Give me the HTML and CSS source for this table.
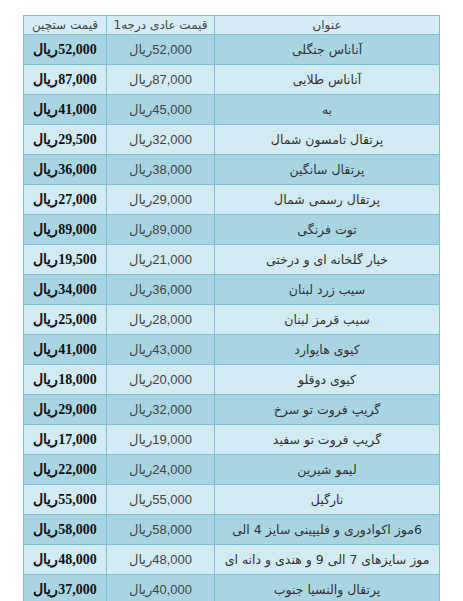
FILE: index.html
```html
<!DOCTYPE html>
<html lang="fa" dir="rtl">
<head>
    <meta charset="UTF-8">
    <meta name="viewport" content="width=device-width, initial-scale=1.0">
    <title>قیمت میوه</title>
    <link rel="stylesheet" href="styles.css">
</head>
<body>
    <table class="prices">
        <thead>
            <tr>
                <th class="name">عنوان</th>
                <th class="normal">قیمت عادی درجه1</th>
                <th class="select">قیمت ستچین</th>
            </tr>
        </thead>
        <tbody>
            <tr><td>آناناس جنگلی</td><td>52,000ریال</td><td>52,000ریال</td></tr>
            <tr><td>آناناس طلایی</td><td>87,000ریال</td><td>87,000ریال</td></tr>
            <tr><td>به</td><td>45,000ریال</td><td>41,000ریال</td></tr>
            <tr><td>پرتقال تامسون شمال</td><td>32,000ریال</td><td>29,500ریال</td></tr>
            <tr><td>پرتقال سانگین</td><td>38,000ریال</td><td>36,000ریال</td></tr>
            <tr><td>پرتقال رسمی شمال</td><td>29,000ریال</td><td>27,000ریال</td></tr>
            <tr><td>توت فرنگی</td><td>89,000ریال</td><td>89,000ریال</td></tr>
            <tr><td>خیار گلخانه ای و درختی</td><td>21,000ریال</td><td>19,500ریال</td></tr>
            <tr><td>سیب زرد لبنان</td><td>36,000ریال</td><td>34,000ریال</td></tr>
            <tr><td>سیب قرمز لبنان</td><td>28,000ریال</td><td>25,000ریال</td></tr>
            <tr><td>کیوی هایوارد</td><td>43,000ریال</td><td>41,000ریال</td></tr>
            <tr><td>کیوی دوقلو</td><td>20,000ریال</td><td>18,000ریال</td></tr>
            <tr><td>گریپ فروت تو سرخ</td><td>32,000ریال</td><td>29,000ریال</td></tr>
            <tr><td>گریپ فروت تو سفید</td><td>19,000ریال</td><td>17,000ریال</td></tr>
            <tr><td>لیمو شیرین</td><td>24,000ریال</td><td>22,000ریال</td></tr>
            <tr><td>نارگیل</td><td>55,000ریال</td><td>55,000ریال</td></tr>
            <tr><td>6موز اکوادوری و فلیپینی سایز 4 الی</td><td>58,000ریال</td><td>58,000ریال</td></tr>
            <tr><td>موز سایزهای 7 الی 9 و هندی و دانه ای</td><td>48,000ریال</td><td>48,000ریال</td></tr>
            <tr><td>پرتقال والنسیا جنوب</td><td>40,000ریال</td><td>37,000ریال</td></tr>
        </tbody>
    </table>
</body>
</html>
```

FILE: styles.css
```css
body {
    margin: 0;
    padding: 15px 0 0;
    background: #ffffff;
    font-family: "DejaVu Sans", sans-serif;
    color: #222;
}

.prices {
    margin: 0 auto;
    width: 417px;
    border-collapse: collapse;
    table-layout: fixed;
    text-align: center;
}

.prices th,
.prices td {
    border: 1px solid #7dc2d3;
    padding: 0 1px;
    white-space: nowrap;
    overflow: hidden;
}

.prices th {
    height: 18px;
    background: #d5ecf4;
    font-weight: normal;
    font-size: 12px;
    color: #444;
}

.prices .name {
    width: 222px;
}

.prices .normal {
    width: 105px;
}

.prices td {
    height: 29px;
    font-size: 12.5px;
    color: #333;
}

.prices tbody tr:nth-child(odd) {
    background: #a9d5e3;
}

.prices tbody tr:nth-child(even) {
    background: #d2eaf2;
}

.prices td:nth-child(2) {
    font-family: "Liberation Sans", "DejaVu Sans", sans-serif;
    font-size: 13px;
    color: #444;
}

.prices td:nth-child(3) {
    font-family: "Liberation Serif", "DejaVu Serif", serif;
    font-weight: bold;
    font-size: 14px;
    color: #111;
}
```
